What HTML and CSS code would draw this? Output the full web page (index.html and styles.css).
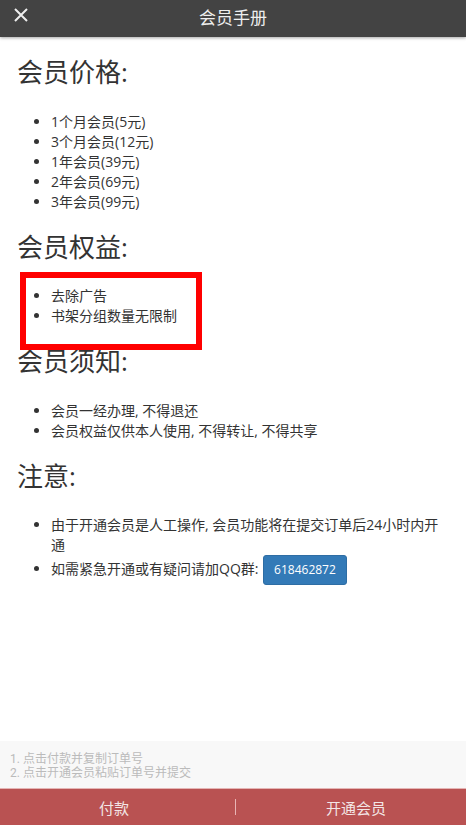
FILE: index.html
```html
<!DOCTYPE html>
<html lang="zh-CN">
<head>
    <meta charset="UTF-8">
    <meta name="viewport" content="width=device-width, initial-scale=1.0">
    <title>会员手册</title>
    <link rel="stylesheet" href="styles.css">
</head>
<body>
    <div class="page">
        <header class="topbar">
            <span class="close">
                <svg width="14" height="14" viewBox="0 0 14 14">
                    <path d="M1 1L13 13M13 1L1 13" stroke="#eeeeee" stroke-width="2" fill="none"/>
                </svg>
            </span>
            <span class="title">会员手册</span>
        </header>

        <main class="content">
            <h3>会员价格:</h3>
            <ul>
                <li>1个月会员(5元)</li>
                <li>3个月会员(12元)</li>
                <li>1年会员(39元)</li>
                <li>2年会员(69元)</li>
                <li>3年会员(99元)</li>
            </ul>

            <h3>会员权益:</h3>
            <div class="marked">
                <ul>
                    <li>去除广告</li>
                    <li>书架分组数量无限制</li>
                </ul>
                <span class="mark-box"></span>
            </div>

            <h3>会员须知:</h3>
            <ul>
                <li>会员一经办理, 不得退还</li>
                <li>会员权益仅供本人使用, 不得转让, 不得共享</li>
            </ul>

            <h3>注意:</h3>
            <ul>
                <li>由于开通会员是人工操作, 会员功能将在提交订单后24小时内开通</li>
                <li>如需紧急开通或有疑问请加QQ群: <a class="btn-qq" href="#">618462872</a></li>
            </ul>
        </main>

        <div class="steps">
            <div>1. 点击付款并复制订单号</div>
            <div>2. 点击开通会员粘贴订单号并提交</div>
        </div>
        <footer class="actions">
            <a class="action action-pay" href="#">付款</a>
            <span class="divider"></span>
            <a class="action action-open" href="#">开通会员</a>
        </footer>
    </div>
</body>
</html>
```

FILE: styles.css
```css
html, body {
    margin: 0;
    padding: 0;
    height: 100%;
}
body {
    font-family: 'Open Sans', 'Noto Sans CJK SC', sans-serif;
    color: #333;
    background: #ffffff;
}
.page {
    display: flex;
    flex-direction: column;
    height: 100vh;
}
.topbar {
    position: relative;
    height: 37px;
    background-color: #434343;
    box-shadow: 0 1px 3px rgba(0, 0, 0, 0.35);
    display: flex;
    align-items: center;
    justify-content: center;
    flex-shrink: 0;
    z-index: 1;
}
.topbar .close {
    position: absolute;
    left: 14px;
    top: 8px;
    width: 14px;
    height: 14px;
    display: flex;
}
.topbar .title {
    font-family: 'Roboto', 'Noto Sans CJK SC', sans-serif;
    font-size: 17px;
    color: #eeeeee;
    margin-top: -5px;
}
.content {
    flex: 1;
    padding: 0 20px 0 17px;
    overflow: hidden;
}
h3 {
    font-size: 26px;
    font-weight: 400;
    line-height: 1.1;
    margin: 21px 0 25px;
}
ul {
    margin: 0 0 1px;
    padding-left: 34px;
}
li {
    font-size: 14px;
    line-height: 20px;
}
.marked {
    position: relative;
}
.mark-box {
    position: absolute;
    left: 3px;
    top: -14px;
    width: 170px;
    height: 66px;
    border: 6px solid #ff0000;
}
.btn-qq {
    display: inline-block;
    vertical-align: middle;
    margin-left: 1px;
    padding: 5px 10px;
    font-size: 12px;
    line-height: 18px;
    color: #ffffff;
    background-color: #337ab7;
    border: 1px solid #2e6da4;
    border-radius: 3px;
    text-decoration: none;
}
.steps {
    flex-shrink: 0;
    height: 47px;
    box-sizing: border-box;
    padding: 11px 10px 0;
    background: #f8f8f8;
    font-family: 'Roboto', 'Noto Sans CJK SC', sans-serif;
    font-size: 12px;
    line-height: 14px;
    color: #bbbbbb;
}
.actions {
    flex-shrink: 0;
    height: 37px;
    box-sizing: border-box;
    border-top: 1px solid #e5b5b5;
    background-color: #b95252;
    display: flex;
    align-items: center;
}
.action {
    text-align: center;
    font-family: 'Roboto', 'Noto Sans CJK SC', sans-serif;
    font-size: 15px;
    color: #f3e6e6;
    text-decoration: none;
}
.action-pay {
    width: 235px;
    box-sizing: border-box;
    padding-right: 7px;
}
.action-open {
    flex: 1;
    padding-left: 10px;
}
.divider {
    width: 1px;
    height: 16px;
    background: #e9b5b5;
}
```
